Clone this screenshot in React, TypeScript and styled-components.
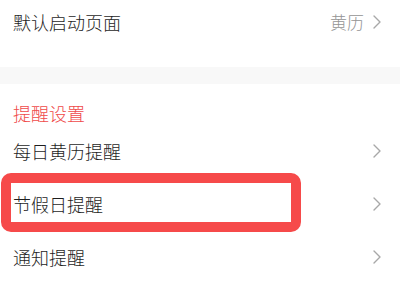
import React from "react";
import styled, { createGlobalStyle } from "styled-components";

const Global = createGlobalStyle`
  html, body { margin: 0; padding: 0; background: #ffffff; }
  body { font-family: "Noto Sans CJK SC", "Noto Sans", sans-serif; width: 400px; height: 296px; overflow: hidden; }
`;

const Page = styled.div`
  width: 400px;
  display: flex;
  flex-direction: column;
  background: #ffffff;
`;

const Row = styled.div<{ $h: number }>`
  position: relative;
  height: ${(p) => p.$h}px;
  display: flex;
  align-items: center;
  justify-content: space-between;
  padding: 0 19px 0 13px;
  box-sizing: border-box;
`;

const Label = styled.span`
  font-size: 18px;
  line-height: 18px;
  font-weight: 300;
  color: #1e1e1e;
`;

const Right = styled.div`
  display: flex;
  align-items: center;
  gap: 9px;
`;

const Value = styled.span`
  font-size: 17px;
  line-height: 18px;
  font-weight: 300;
  color: #949494;
`;

const Spacer = styled.div<{ $h: number }>`
  height: ${(p) => p.$h}px;
`;

const Band = styled.div`
  height: 17px;
  background: #f8f8f8;
`;

const Header = styled.div`
  height: 40px;
  padding: 20px 13px 0;
  box-sizing: border-box;
  font-size: 18px;
  line-height: 18px;
  font-weight: 300;
  color: #ef4a4a;
`;

const Highlight = styled.div`
  position: absolute;
  left: 1px;
  top: -4px;
  width: 300px;
  height: 59px;
  box-sizing: border-box;
  border: 10px solid #f64a4a;
  border-radius: 10px;
  pointer-events: none;
`;

const Chevron = () => (
  <svg width="8" height="14" viewBox="0 0 8 14" fill="none">
    <path d="M1 1 L7 7 L1 13" stroke="#a8a8a8" strokeWidth="1.4" strokeLinecap="round" strokeLinejoin="round" />
  </svg>
);

export default function App() {
  return (
    <>
      <Global />
      <Page>
        <Row $h={44}>
          <Label>默认启动页面</Label>
          <Right>
            <Value>黄历</Value>
            <Chevron />
          </Right>
        </Row>
        <Spacer $h={23} />
        <Band />
        <Header>提醒设置</Header>
        <Row $h={53}>
          <Label>每日黄历提醒</Label>
          <Chevron />
        </Row>
        <Row $h={53}>
          <Label>节假日提醒</Label>
          <Chevron />
          <Highlight />
        </Row>
        <Row $h={53}>
          <Label>通知提醒</Label>
          <Chevron />
        </Row>
      </Page>
    </>
  );
}
